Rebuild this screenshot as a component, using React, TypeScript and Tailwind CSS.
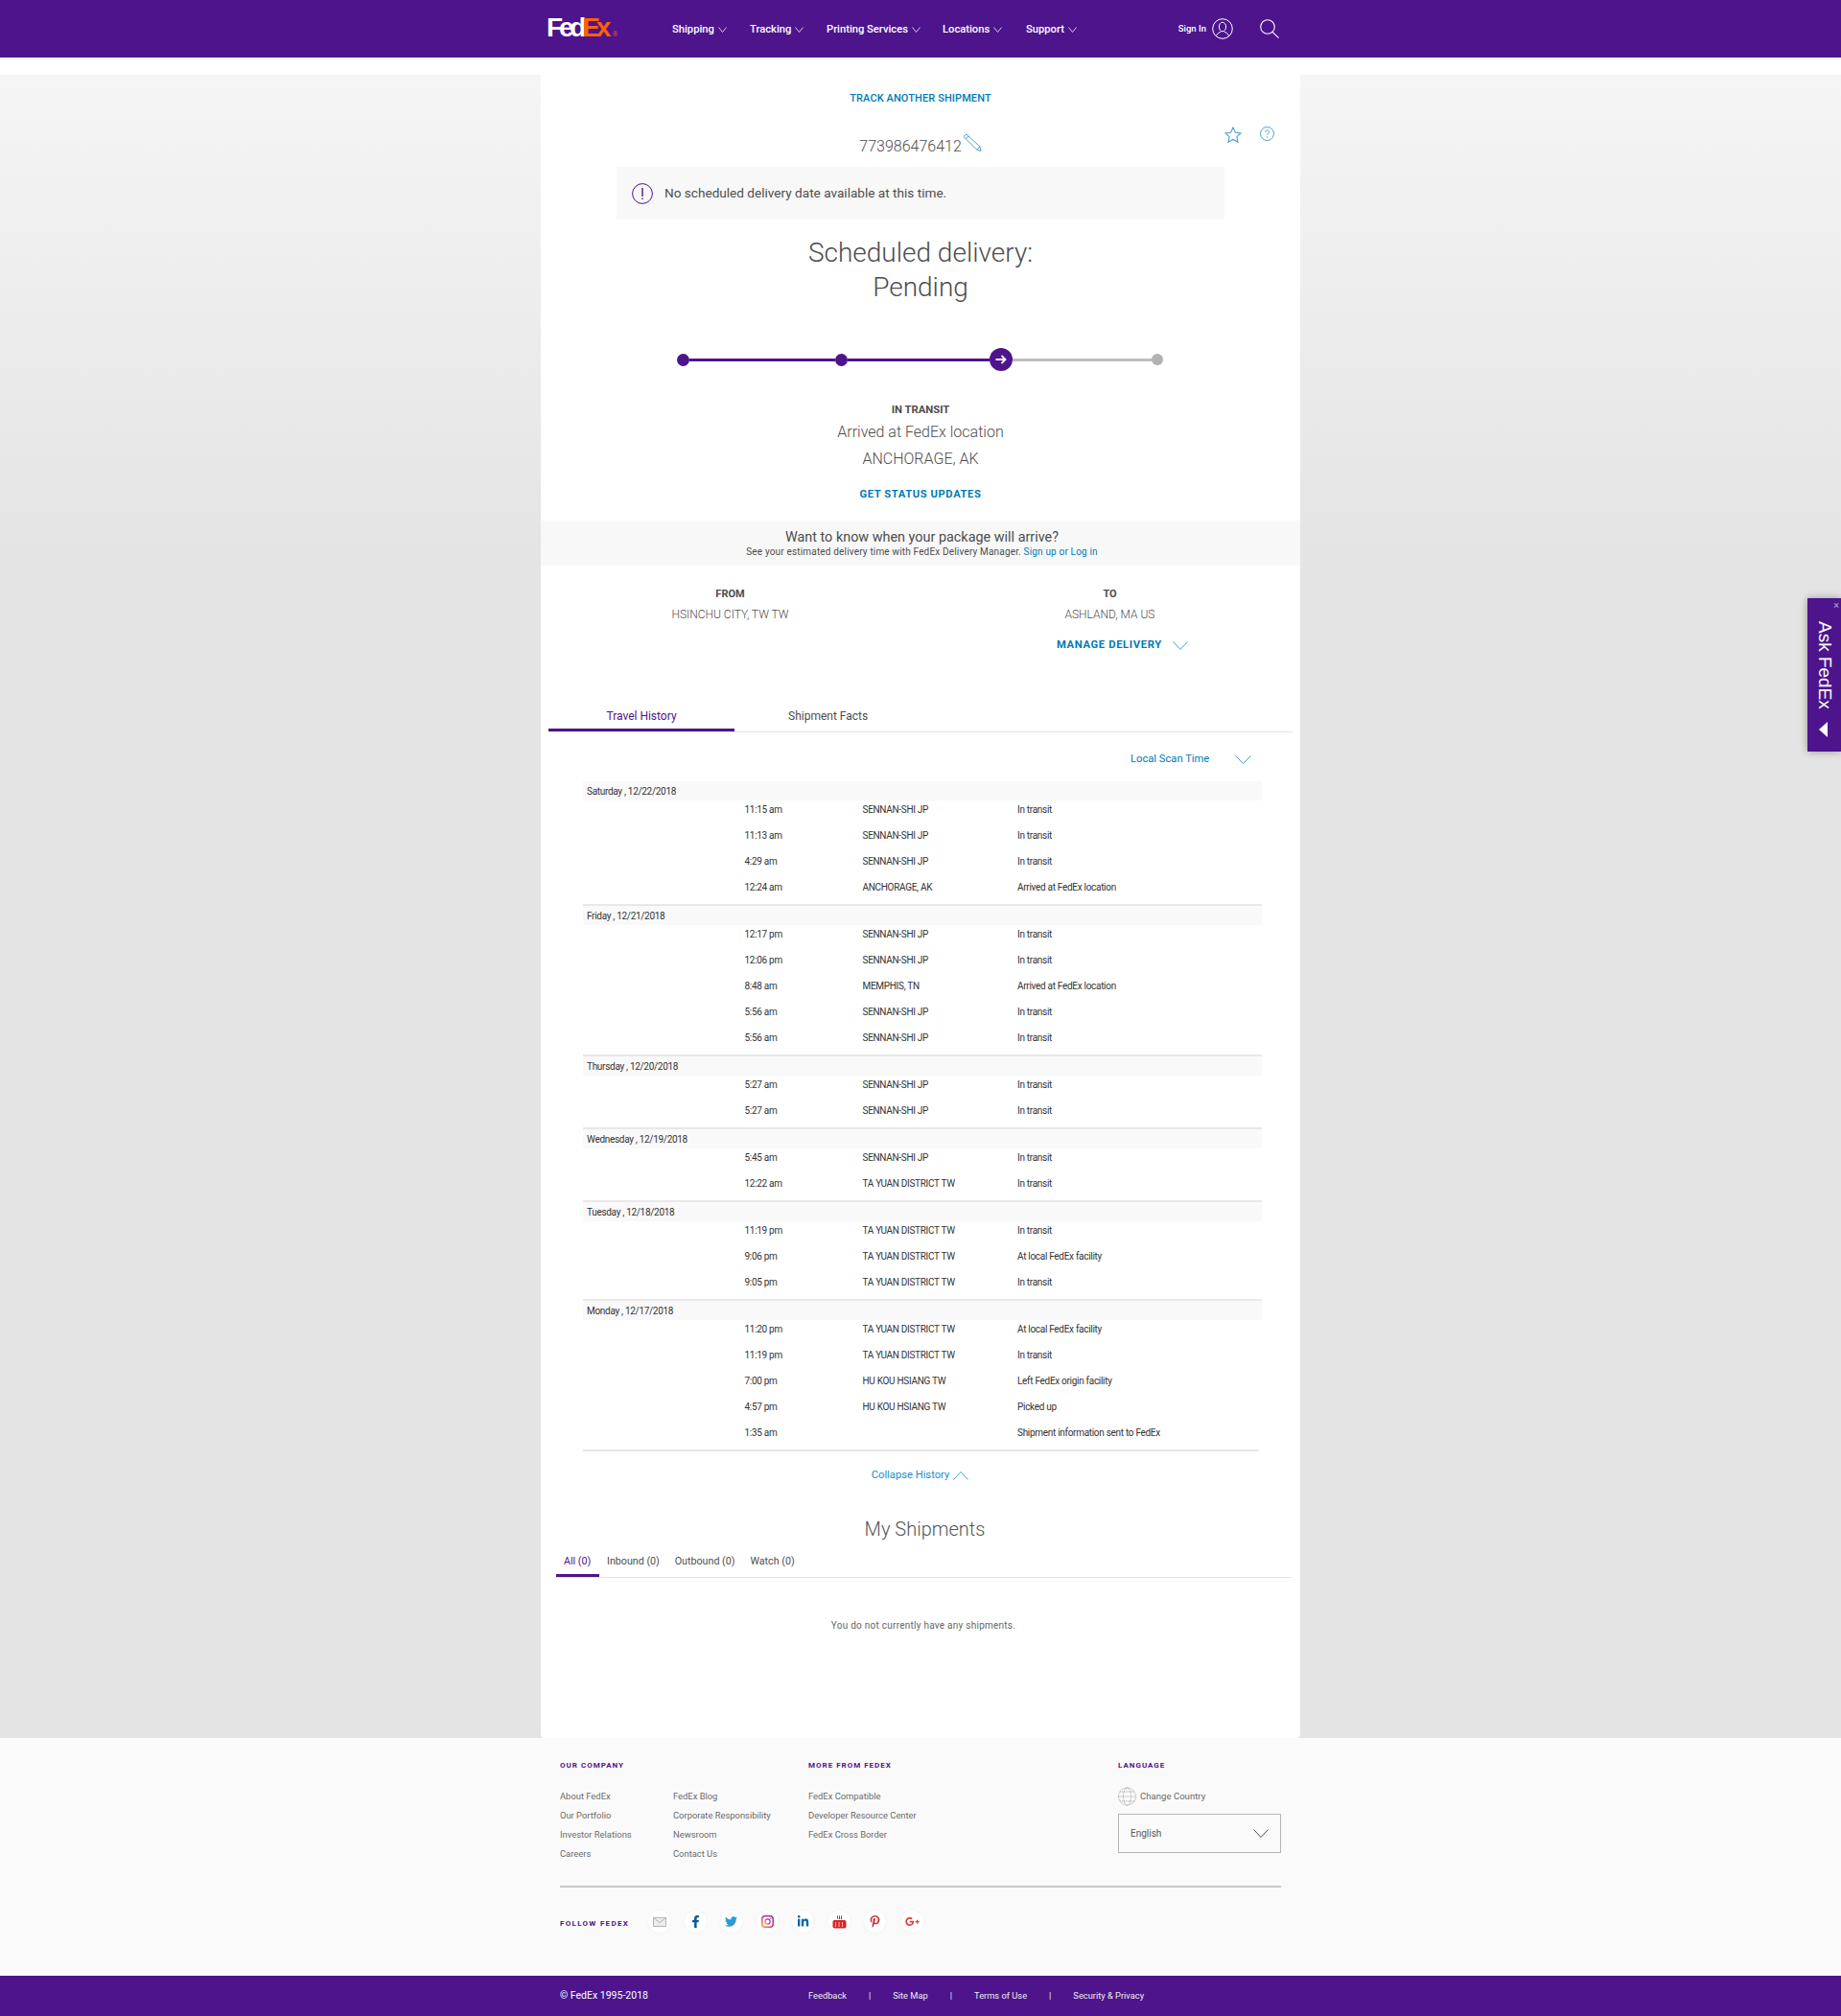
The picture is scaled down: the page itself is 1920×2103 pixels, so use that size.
import React from "react";
import { FaFacebookF, FaTwitter, FaLinkedinIn, FaPinterestP, FaGooglePlusG } from "react-icons/fa";

const Chevron = ({ w, h, color, up, sw = 1 }: { w: number; h: number; color: string; up?: boolean; sw?: number }) => (
  <svg width={w} height={h} viewBox={`0 0 ${w} ${h}`} fill="none" stroke={color} strokeWidth={sw} className="shrink-0">
    <polyline points={up ? `0.5,${h - 0.5} ${w / 2},0.5 ${w - 0.5},${h - 0.5}` : `0.5,0.5 ${w / 2},${h - 0.5} ${w - 0.5},0.5`} />
  </svg>
);

const nav: [string, string][] = [
  ["Shipping", "w-[81px]"],
  ["Tracking", "w-[80px]"],
  ["Printing Services", "w-[121px]"],
  ["Locations", "w-[87px]"],
  ["Support", "w-[80px]"],
];

type Row = [string, string, string];
const S = "SENNAN-SHI JP";
const T = "TA YUAN DISTRICT TW";
const I = "In transit";
const A = "Arrived at FedEx location";
const L = "At local FedEx facility";
const groups: { date: string; rows: Row[] }[] = [
  { date: "Saturday , 12/22/2018", rows: [["11:15 am", S, I], ["11:13 am", S, I], ["4:29 am", S, I], ["12:24 am", "ANCHORAGE, AK", A]] },
  { date: "Friday , 12/21/2018", rows: [["12:17 pm", S, I], ["12:06 pm", S, I], ["8:48 am", "MEMPHIS, TN", A], ["5:56 am", S, I], ["5:56 am", S, I]] },
  { date: "Thursday , 12/20/2018", rows: [["5:27 am", S, I], ["5:27 am", S, I]] },
  { date: "Wednesday , 12/19/2018", rows: [["5:45 am", S, I], ["12:22 am", T, I]] },
  { date: "Tuesday , 12/18/2018", rows: [["11:19 pm", T, I], ["9:06 pm", T, L], ["9:05 pm", T, I]] },
  { date: "Monday , 12/17/2018", rows: [["11:20 pm", T, L], ["11:19 pm", T, I], ["7:00 pm", "HU KOU HSIANG TW", "Left FedEx origin facility"], ["4:57 pm", "HU KOU HSIANG TW", "Picked up"], ["1:35 am", "", "Shipment information sent to FedEx"]] },
];

const FooterCol = ({ items }: { items: string[] }) => (
  <div className="flex flex-col">
    {items.map((t) => (
      <div key={t} className="h-[20px] leading-[20px] text-[9.4px] text-[#6a6a6a] whitespace-nowrap">{t}</div>
    ))}
  </div>
);

const FooterHead = ({ children }: { children: React.ReactNode }) => (
  <div className="h-[10px] leading-[10px] text-[8px] font-bold tracking-[1px] text-[#4d148c] whitespace-nowrap">{children}</div>
);

const Social = ({ children }: { children: React.ReactNode }) => (
  <div className="w-[23px] h-[23px] rounded-full bg-white shadow-[0_0_2px_rgba(0,0,0,0.08)] flex items-center justify-center">{children}</div>
);

export default function App() {
  return (
    <div className="relative w-[1920px] h-[2103px] overflow-hidden bg-white font-['Roboto',sans-serif] text-[#4d4d4d]">
      <header className="h-[60px] bg-[#4d148c] flex justify-center">
        <div className="w-[792px] flex items-center pl-[8px] pr-[22px]">
          <div className="w-[129px] h-[60px] pt-[13px] font-['Liberation_Sans',sans-serif] font-bold text-[28px] leading-[32px] tracking-[-4.2px] whitespace-nowrap">
            <span className="text-white -ml-[2px]">Fed</span><span className="text-[#ff6200]">Ex</span>
            <span className="text-[#ff6200] text-[7px] tracking-normal font-normal ml-[6px]">®</span>
          </div>
          {nav.map(([t, w]) => (
            <div key={t} className={`${w} flex items-center gap-[4px] text-white text-[11.2px] font-medium pt-[2px]`}>
              <span className="whitespace-nowrap">{t}</span>
              <Chevron w={9} h={6} color="#d5c8e4" />
            </div>
          ))}
          <div className="ml-auto flex items-center">
            <span className="text-white text-[9.5px] font-medium mr-[6px] pt-[1px]">Sign In</span>
            <svg width="22" height="22" viewBox="0 0 22 22" fill="none" stroke="#fff" strokeWidth="1" className="mr-[28px]">
              <circle cx="11" cy="11" r="10.3" />
              <ellipse cx="11" cy="9" rx="3.6" ry="4.8" />
              <path d="M4.5 18.5c.8-3 3.5-3.5 4.8-4.6M17.5 18.5c-.8-3-3.5-3.5-4.8-4.6" />
            </svg>
            <svg width="20" height="20" viewBox="0 0 20 20" fill="none" stroke="#fff" strokeWidth="1.1">
              <circle cx="8" cy="8" r="7.3" />
              <line x1="13" y1="13.4" x2="19.6" y2="19.6" />
            </svg>
          </div>
        </div>
      </header>
      <div className="h-[18px] bg-white" />

      <main className="h-[1735px] flex justify-center bg-[linear-gradient(to_bottom,#f5f5f5_0px,#e4e4e4_500px,#e4e4e4_100%)]">
        <div className="w-[792px] h-[1735px] bg-white rounded-b-[4px]">
          <div className="h-[48px] pt-[2px] flex items-center justify-center text-[11px] font-medium text-[#007ab7] tracking-[0.1px]">TRACK ANOTHER SHIPMENT</div>

          <div className="h-[48px] grid grid-cols-[1fr_auto_1fr] items-start">
            <div />
            <div className="flex items-start pt-[14px]">
              <span className="text-[16px] leading-[26px] font-light text-[#4d4d4d]">773986476412</span>
              <svg width="20" height="19" viewBox="0 0 20 19" fill="none" stroke="#4a9fd0" strokeWidth="1" className="ml-[1px] -mt-[1px]">
                <path d="M1 3.5 L4 1 L18 14 L19 18.5 L14.5 17 Z" />
                <path d="M3 6 L6 3" />
                <path d="M14.5 17 L18 14" />
              </svg>
            </div>
            <div className="flex justify-end items-start gap-[19px] pr-[27px] pt-[6px]">
              <svg width="18" height="17" viewBox="0 0 18 17" fill="none" stroke="#4a9fd0" strokeWidth="1.1">
                <path d="M9 1l2.4 5.2 5.6.7-4.1 3.8 1.1 5.6L9 13.5l-5 2.8 1.1-5.6L1 6.9l5.6-.7z" />
              </svg>
              <svg width="15" height="15" viewBox="0 0 15 15" fill="none" stroke="#4a9fd0" strokeWidth="1">
                <circle cx="7.5" cy="7.5" r="7" />
                <path d="M5.6 5.8c0-1.2.9-2 2-2s2 .8 2 1.9c0 1.4-2 1.6-2 3.2" />
                <circle cx="7.6" cy="11" r="0.3" />
              </svg>
            </div>
          </div>

          <div className="mx-[79px] h-[55px] bg-[#f8f8f8] flex items-center pl-[16px]">
            <svg width="22" height="22" viewBox="0 0 22 22" fill="none" stroke="#4d148c" strokeWidth="1" className="mr-[12px]">
              <circle cx="11" cy="11" r="10.4" />
              <line x1="11" y1="5" x2="11" y2="14" strokeWidth="1.4" />
              <line x1="11" y1="15.5" x2="11" y2="17" strokeWidth="1.4" />
            </svg>
            <span className="text-[13.6px] text-[#4d4d4d]">No scheduled delivery date available at this time.</span>
          </div>

          <div className="mt-[17px] text-center text-[28px] leading-[36px] font-light text-[#4d4d4d]">
            <div>Scheduled delivery:</div>
            <div>Pending</div>
          </div>

          <div className="mt-[44px] h-[26px] flex items-center justify-center pr-[2px]">
            <div className="w-[13px] h-[13px] rounded-full bg-[#4d148c]" />
            <div className="w-[152px] h-[3px] bg-[#4d148c]" />
            <div className="w-[13px] h-[13px] rounded-full bg-[#4d148c]" />
            <div className="w-[148px] h-[3px] bg-[#4d148c]" />
            <div className="w-[24px] h-[24px] rounded-full bg-[#4d148c] flex items-center justify-center">
              <svg width="12" height="10" viewBox="0 0 12 10" fill="none" stroke="#fff" strokeWidth="1.8">
                <path d="M0.5 5H10.5M6.5 1l4 4-4 4" />
              </svg>
            </div>
            <div className="w-[145px] h-[3px] bg-[#bdbdbd]" />
            <div className="w-[12px] h-[12px] rounded-full bg-[#b2b2b2]" />
          </div>

          <div className="mt-[32px] text-center text-[11.3px] leading-[16px] font-bold text-[#4d4d4d]">IN TRANSIT</div>
          <div className="mt-[1px] text-center text-[16px] leading-[28px] font-light text-[#4d4d4d]">Arrived at FedEx location</div>
          <div className="text-center text-[16px] leading-[28px] font-light text-[#4d4d4d]">ANCHORAGE, AK</div>
          <div className="mt-[15px] text-center text-[11.2px] leading-[16px] font-bold tracking-[0.6px] text-[#007ab7]">GET STATUS UPDATES</div>

          <div className="mt-[19px] h-[47px] bg-[#f8f8f8] pt-[8px] pl-[3px] text-center">
            <div className="text-[14.4px] leading-[20px] text-[#4d4d4d]">Want to know when your package will arrive?</div>
            <div className="-mt-[1px] text-[10px] leading-[12px] tracking-[0.17px] text-[#4d4d4d]">
              See your estimated delivery time with FedEx Delivery Manager. <span className="text-[#007ab7]">Sign up or Log in</span>
            </div>
          </div>

          <div className="mt-[23px] grid grid-cols-[395px_397px]">
            <div className="text-center">
              <div className="text-[11px] leading-[14px] font-bold">FROM</div>
              <div className="mt-[7px] text-[12px] leading-[14px] font-light">HSINCHU CITY, TW TW</div>
            </div>
            <div className="text-center">
              <div className="text-[11px] leading-[14px] font-bold">TO</div>
              <div className="mt-[7px] text-[12px] leading-[14px] font-light">ASHLAND, MA US</div>
              <div className="mt-[18px] flex items-center justify-start pl-[143px] leading-[14px]">
                <span className="text-[11.3px] font-bold tracking-[0.6px] text-[#007ab7] whitespace-nowrap">MANAGE DELIVERY</span>
                <span className="ml-[11px]"><Chevron w={16} h={9} color="#3f9fd4" /></span>
              </div>
            </div>
          </div>

          <div className="mt-[53px] mx-[8px] flex border-b border-[#e3e3e3] text-[12px]">
            <div className="w-[194px] h-[30px] leading-[29px] border-b-[3px] border-[#4d148c] text-[#4d148c] text-center">Travel History</div>
            <div className="ml-[56px] h-[30px] leading-[29px] text-[#4d4d4d]">Shipment Facts</div>
          </div>

          <div className="mt-[20px] h-[16px] flex items-center pl-[615px] text-[11.2px] text-[#007ab7]">
            <span className="w-[109px] whitespace-nowrap pt-[1px]">Local Scan Time</span>
            <Chevron w={17} h={9} color="#3f9fd4" />
          </div>

          <div className="mt-[15px] ml-[44px] w-[708px] text-[#333] text-[10px] tracking-[-0.3px]">
            {groups.map((g, gi) => (
              <div key={g.date}>
                <div className="h-[20px] leading-[21px] bg-[#f9f9f9] pl-[4px]">{g.date}</div>
                <div className={`${gi === groups.length - 1 ? "w-[705px]" : "w-[708px]"} border-b-2 border-[#e8e8e8]`}>
                  {g.rows.map((r, i) => (
                    <div key={i} className="h-[27px] leading-[20px] pl-[168.5px] grid grid-cols-[123px_161.5px_1fr]">
                      <span>{r[0]}</span>
                      <span>{r[1]}</span>
                      <span>{r[2]}</span>
                    </div>
                  ))}
                </div>
              </div>
            ))}
          </div>

          <div className="mt-[17px] h-[16px] flex items-center justify-center gap-[4px] text-[11.2px] text-[#1c8ed0] pr-[1px]">
            <span>Collapse History</span>
            <Chevron w={16} h={9} color="#3f9fd4" up />
          </div>

          <div className="mt-[33px] pl-[9px] text-center text-[20px] leading-[30px] font-light text-[#565656]">My Shipments</div>

          <div className="mt-[5px] ml-[16px] w-[767px] flex border-b border-[#e3e3e3] text-[10.7px]">
            <div className="w-[45px] h-[30px] pl-[8px] pt-[6px] leading-[16px] border-b-[3px] border-[#4d148c] text-[#4d148c] whitespace-nowrap">All (0)</div>
            <div className="h-[30px] px-[8px] pt-[6px] leading-[16px] whitespace-nowrap">Inbound (0)</div>
            <div className="h-[30px] px-[8px] pt-[6px] leading-[16px] whitespace-nowrap">Outbound (0)</div>
            <div className="h-[30px] px-[8px] pt-[6px] leading-[16px] whitespace-nowrap">Watch (0)</div>
          </div>

          <div className="mt-[43px] pl-[6px] text-center text-[10px] leading-[14px] tracking-[0.25px] text-[#666]">You do not currently have any shipments.</div>
        </div>
      </main>

      <footer className="h-[248px] bg-[#fafafa] flex justify-center">
        <div className="w-[752px] pt-[24px]">
          <div className="h-[130px] grid grid-cols-[259px_323px_170px]">
            <div>
              <FooterHead>OUR COMPANY</FooterHead>
              <div className="mt-[17px] grid grid-cols-[118px_141px]">
                <FooterCol items={["About FedEx", "Our Portfolio", "Investor Relations", "Careers"]} />
                <FooterCol items={["FedEx Blog", "Corporate Responsibility", "Newsroom", "Contact Us"]} />
              </div>
            </div>
            <div>
              <FooterHead>MORE FROM FEDEX</FooterHead>
              <div className="mt-[17px]">
                <FooterCol items={["FedEx Compatible", "Developer Resource Center", "FedEx Cross Border"]} />
              </div>
            </div>
            <div>
              <FooterHead>LANGUAGE</FooterHead>
              <div className="mt-[17px] h-[20px] flex items-center gap-[4px] text-[9.6px] text-[#6a6a6a]">
                <svg width="19" height="20" viewBox="0 0 19 20" fill="none" stroke="#8a8a8a" strokeWidth="0.7" strokeDasharray="1.2 0.8">
                  <circle cx="9.5" cy="10" r="9" />
                  <ellipse cx="9.5" cy="10" rx="4" ry="9" />
                  <line x1="0.5" y1="10" x2="18.5" y2="10" />
                  <line x1="2" y1="5" x2="17" y2="5" />
                  <line x1="2" y1="15" x2="17" y2="15" />
                </svg>
                <span>Change Country</span>
              </div>
              <div className="mt-[8px] h-[41px] border border-[#b5b5b5] flex items-center justify-between pl-[12px] pr-[12px] text-[10px] text-[#565656]">
                <span>English</span>
                <Chevron w={16} h={9} color="#4d4d4d" />
              </div>
            </div>
          </div>
          <div className="h-[2px] bg-[#c8c8c8]" />
          <div className="mt-[24px] flex items-start">
            <div className="mt-[9px] h-[10px] leading-[10px] text-[8px] font-bold tracking-[1.3px] text-[#4d148c] whitespace-nowrap">FOLLOW FEDEX</div>
            <div className="ml-[20px] flex gap-[14.5px]">
              <Social>
                <svg width="14" height="10" viewBox="0 0 14 10" fill="#ececec" stroke="#a8a8a8" strokeWidth="0.8">
                  <rect x="0.5" y="0.5" width="13" height="9" />
                  <path d="M0.5 0.5l6.5 5 6.5-5" fill="none" />
                </svg>
              </Social>
              <Social><FaFacebookF size={13} color="#0c5a98" /></Social>
              <Social><FaTwitter size={13} color="#2a9bd8" /></Social>
              <Social>
                <svg width="13" height="13" viewBox="0 0 13 13" fill="none">
                  <defs>
                    <linearGradient id="ig" x1="0" y1="1" x2="1" y2="0">
                      <stop offset="0" stopColor="#f9a13a" />
                      <stop offset="0.5" stopColor="#dd2a7b" />
                      <stop offset="1" stopColor="#8134af" />
                    </linearGradient>
                  </defs>
                  <rect x="0.8" y="0.8" width="11.4" height="11.4" rx="3" stroke="url(#ig)" strokeWidth="1.5" />
                  <circle cx="6.5" cy="6.5" r="2.6" stroke="url(#ig)" strokeWidth="1.2" />
                  <circle cx="9.8" cy="3.2" r="0.7" fill="#c13584" />
                </svg>
              </Social>
              <Social><FaLinkedinIn size={13} color="#0a66a8" /></Social>
              <Social>
                <svg width="15" height="14" viewBox="0 0 15 14" fill="none">
                  <path d="M5.5 0.5v3M7.5 0.5v3.5M9.5 0.5v3.5" stroke="#8a3a3a" strokeWidth="1" />
                  <rect x="0.5" y="5" width="14" height="8.5" rx="1.8" fill="#d7262a" />
                  <path d="M3.5 7v5M7 7v5M10.5 7v5" stroke="#ffd9d9" strokeWidth="0.8" />
                </svg>
              </Social>
              <Social><FaPinterestP size={13} color="#cc2130" /></Social>
              <div className="ml-[1px]"><Social><FaGooglePlusG size={15} color="#d8412f" /></Social></div>
            </div>
          </div>
        </div>
      </footer>

      <div className="h-[42px] bg-[#4d148c] flex justify-center">
        <div className="w-[752px] flex items-center text-white text-[10.5px]">
          <span className="w-[259px]">© FedEx 1995-2018</span>
          <div className="flex items-center gap-[23px] text-[9.3px] text-[#eee]">
            <span>Feedback</span><span>|</span><span>Site Map</span><span>|</span><span>Terms of Use</span><span>|</span><span>Security &amp; Privacy</span>
          </div>
        </div>
      </div>

      <div className="absolute left-[1885px] top-[624px] w-[35px] h-[160px] bg-[#4d148c] shadow-[0_0_8px_rgba(0,0,0,0.35)]">
        <span className="absolute right-[2px] top-[2px] text-[11px] leading-[11px] text-[#b9a3d6]">×</span>
        <div className="absolute left-[6px] top-[24px] [writing-mode:vertical-rl] font-['Liberation_Sans',sans-serif] text-[19px] leading-[24px] text-white whitespace-nowrap">Ask FedEx</div>
        <div className="absolute left-[12px] top-[129px] w-0 h-0 border-y-[8px] border-y-transparent border-r-[9px] border-r-white" />
      </div>
    </div>
  );
}
